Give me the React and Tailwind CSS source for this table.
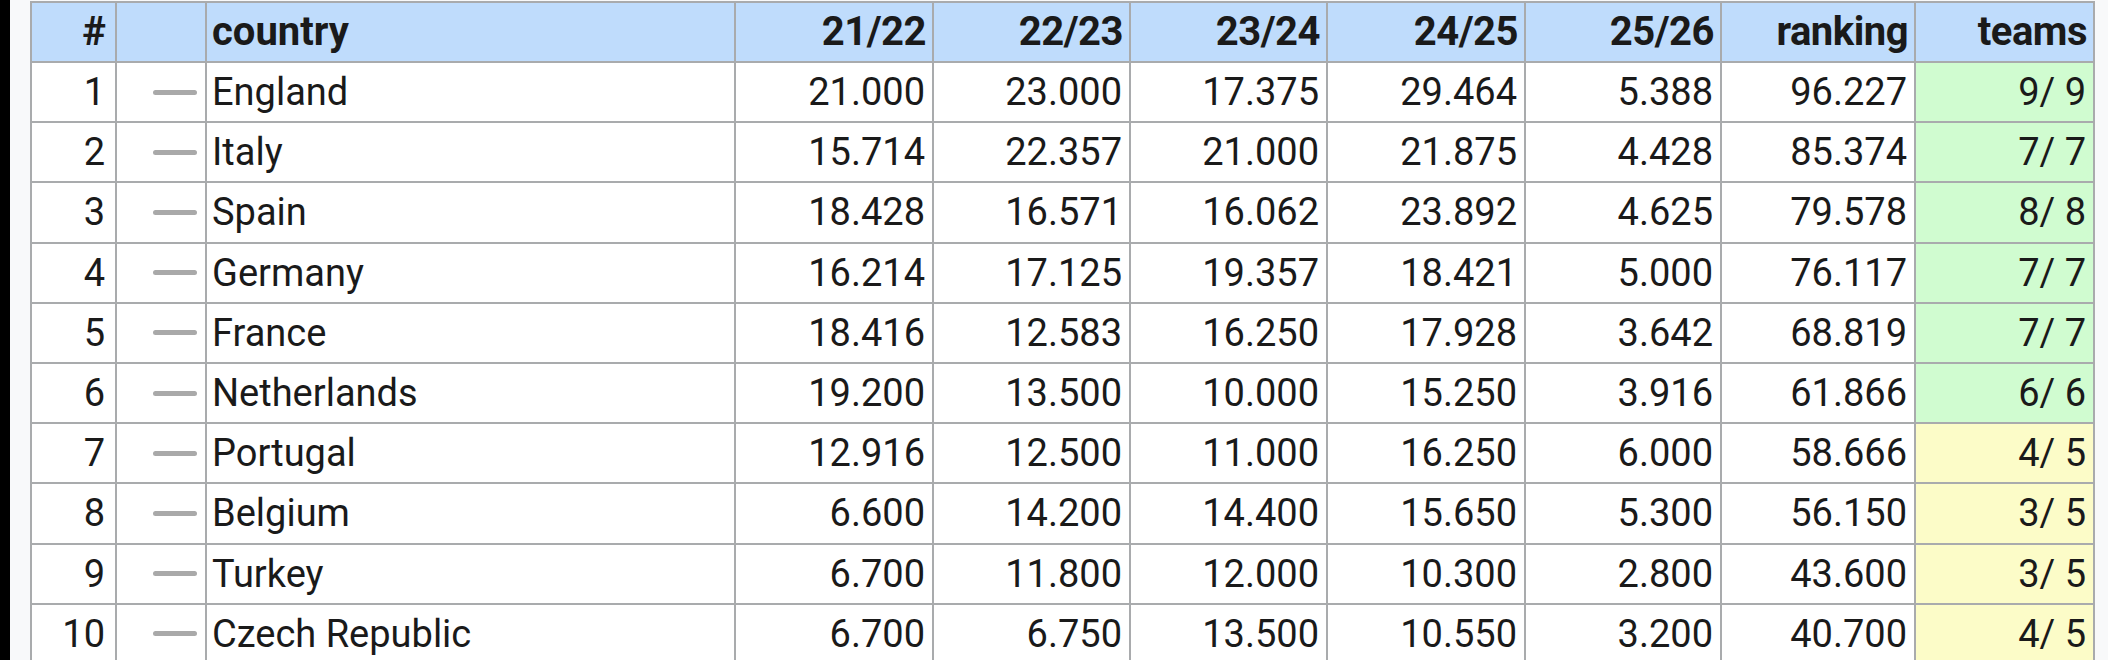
import React from "react";

const rows = [
  [1, "England", "21.000", "23.000", "17.375", "29.464", "5.388", "96.227", "9/ 9", "g"],
  [2, "Italy", "15.714", "22.357", "21.000", "21.875", "4.428", "85.374", "7/ 7", "g"],
  [3, "Spain", "18.428", "16.571", "16.062", "23.892", "4.625", "79.578", "8/ 8", "g"],
  [4, "Germany", "16.214", "17.125", "19.357", "18.421", "5.000", "76.117", "7/ 7", "g"],
  [5, "France", "18.416", "12.583", "16.250", "17.928", "3.642", "68.819", "7/ 7", "g"],
  [6, "Netherlands", "19.200", "13.500", "10.000", "15.250", "3.916", "61.866", "6/ 6", "g"],
  [7, "Portugal", "12.916", "12.500", "11.000", "16.250", "6.000", "58.666", "4/ 5", "y"],
  [8, "Belgium", "6.600", "14.200", "14.400", "15.650", "5.300", "56.150", "3/ 5", "y"],
  [9, "Turkey", "6.700", "11.800", "12.000", "10.300", "2.800", "43.600", "3/ 5", "y"],
  [10, "Czech Republic", "6.700", "6.750", "13.500", "10.550", "3.200", "40.700", "4/ 5", "y"],
];

const heads = ["21/22", "22/23", "23/24", "24/25", "25/26", "ranking", "teams"];

export default function App() {
  return (
    <div
      className="flex h-[660px] w-[2108px] overflow-hidden bg-[#f8f9fa] text-[#1a1a1a]"
      style={{ fontFamily: "Roboto, 'Liberation Sans', sans-serif" }}
    >
      <div className="w-[10px] shrink-0 bg-black" />
      <div className="pl-[20px] pt-[1px]">
        <div className="grid w-max grid-cols-[83px_88px_527px_196px_195px_195px_196px_194px_192px_177px] gap-[2px] bg-[#a9abad] p-[2px] text-[38px] leading-none">
          <div className="flex h-[58px] items-center justify-end bg-[#bfdcfc] px-[9px] text-[40px] font-bold">#</div>
          <div className="h-[58px] bg-[#bfdcfc]" />
          <div className="flex h-[58px] items-center bg-[#bfdcfc] px-[5px] text-[40px] font-bold">country</div>
          {heads.map((h) => (
            <div key={h} className="flex h-[58px] items-center justify-end bg-[#bfdcfc] px-[6px] text-[40px] font-bold tracking-[-0.5px]">
              {h}
            </div>
          ))}
          {rows.map((r) => (
            <React.Fragment key={r[0]}>
              <div className="flex h-[58.2px] items-center justify-end bg-white px-[10px]">{r[0]}</div>
              <div className="flex h-[58.2px] items-center justify-end bg-white pr-[8px]">
                <div className="h-[5px] w-[44px] rounded-full bg-[#a9a9a9] blur-[0.6px]" />
              </div>
              <div className="flex h-[58.2px] items-center bg-white px-[5px]">{r[1]}</div>
              {r.slice(2, 8).map((v, i) => (
                <div key={i} className="flex h-[58.2px] items-center justify-end bg-white px-[7px]">
                  {v}
                </div>
              ))}
              <div
                className={
                  "flex h-[58.2px] items-center justify-end whitespace-pre px-[7px] " +
                  (r[9] === "g" ? "bg-[#d0fcd0]" : "bg-[#fcfcc8]")
                }
              >
                {r[8]}
              </div>
            </React.Fragment>
          ))}
        </div>
      </div>
    </div>
  );
}
